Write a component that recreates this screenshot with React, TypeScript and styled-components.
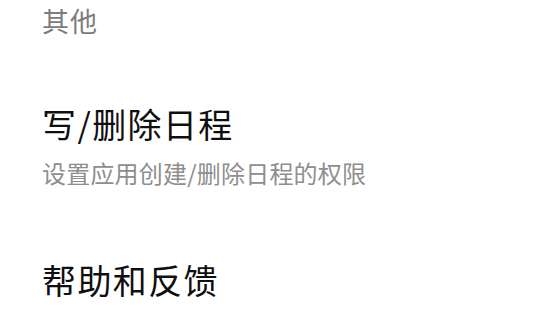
import React from "react";
import styled, { createGlobalStyle } from "styled-components";

const GlobalStyle = createGlobalStyle`
  html, body { margin: 0; padding: 0; background: #ffffff; }
  body { font-family: "Noto Sans CJK SC", "Noto Sans", sans-serif; }
`;

const Page = styled.div`
  display: flex;
  flex-direction: column;
  padding: 7px 0 0 42px;
  width: 541px;
  height: 328px;
  box-sizing: border-box;
  overflow: hidden;
`;

const SectionHeader = styled.div`
  font-size: 27px;
  line-height: 27px;
  color: #7c7c7c;
  letter-spacing: 1px;
`;

const Item = styled.div<{ $top: number }>`
  display: flex;
  flex-direction: column;
  gap: 20px;
  margin-top: ${(p) => p.$top}px;
`;

const Title = styled.div`
  font-size: 34px;
  line-height: 34px;
  color: #0f0f0f;
  letter-spacing: 1.4px;
`;

const Subtitle = styled.div`
  font-size: 24px;
  line-height: 24px;
  color: #8e8e8e;
  letter-spacing: 0.2px;
`;

export default function App() {
  return (
    <>
      <GlobalStyle />
      <Page>
        <SectionHeader>其他</SectionHeader>
        <Item $top={73}>
          <Title>写/删除日程</Title>
          <Subtitle>设置应用创建/删除日程的权限</Subtitle>
        </Item>
        <Item $top={78}>
          <Title>帮助和反馈</Title>
        </Item>
      </Page>
    </>
  );
}
